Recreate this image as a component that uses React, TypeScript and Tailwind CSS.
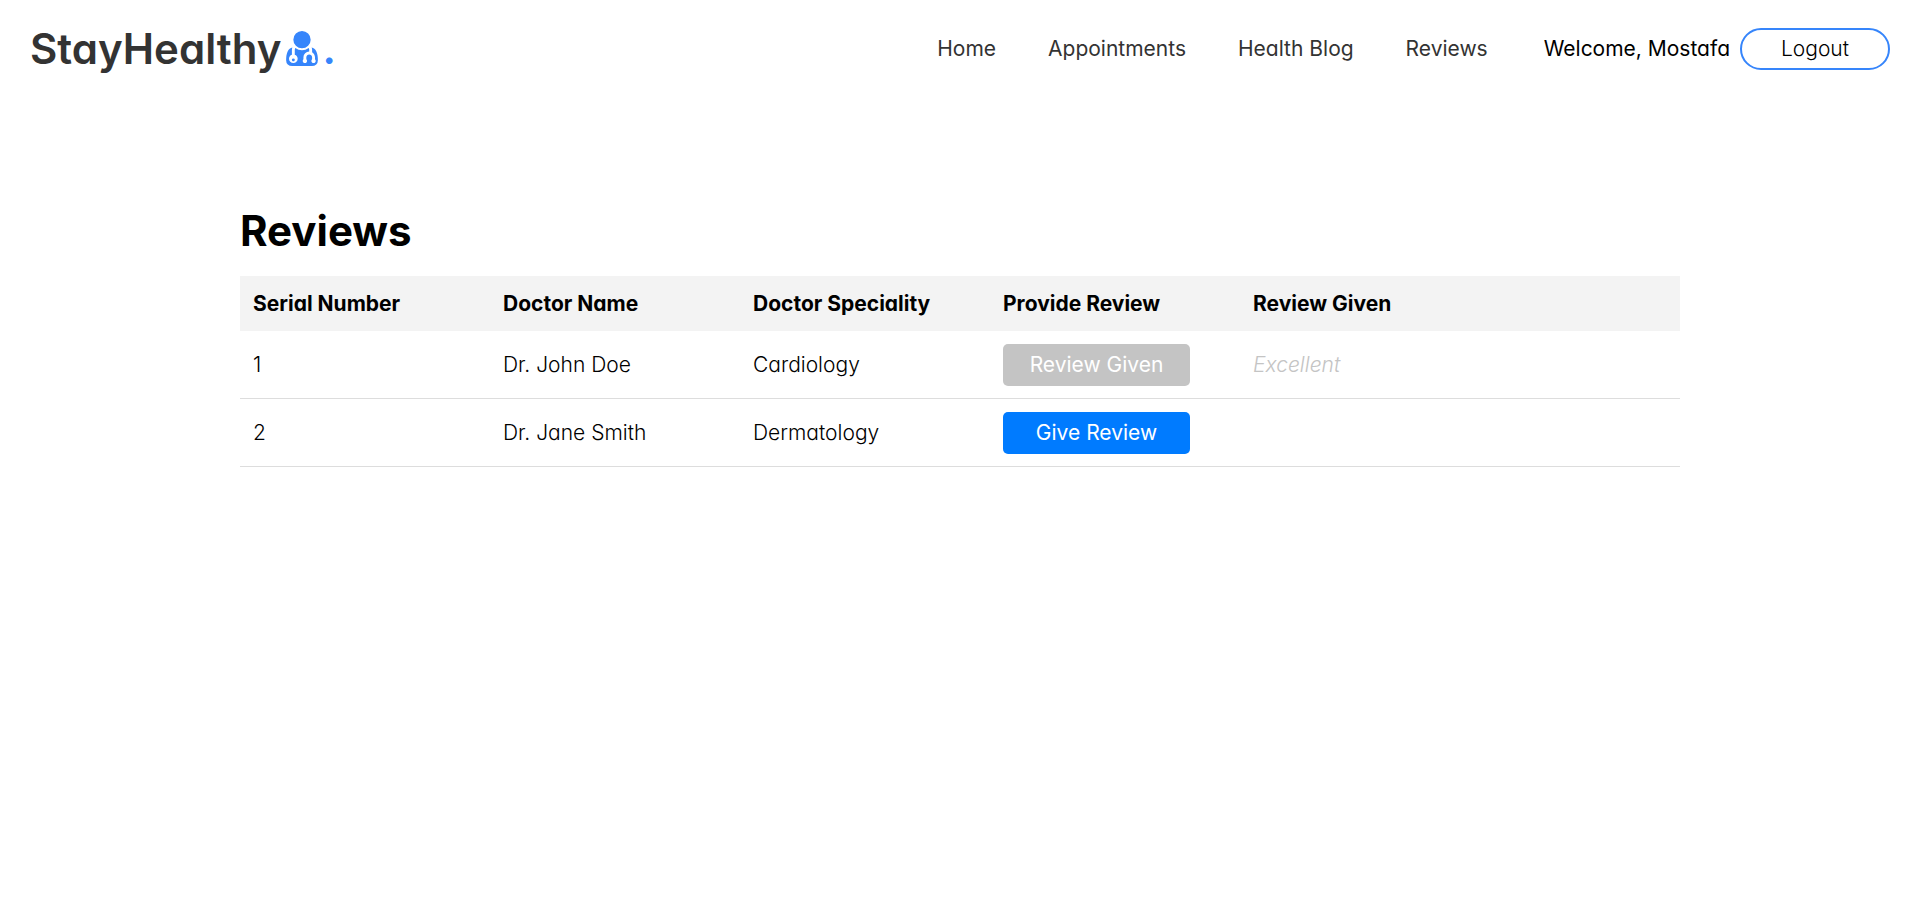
const links = ['Home', 'Appointments', 'Health Blog', 'Reviews'];

const columns = ['Serial Number', 'Doctor Name', 'Doctor Speciality', 'Provide Review'];

const doctors = [
  { id: 1, name: 'Dr. John Doe', speciality: 'Cardiology', review: 'Excellent' },
  { id: 2, name: 'Dr. Jane Smith', speciality: 'Dermatology', review: '' },
];

function DoctorIcon() {
  return (
    <svg viewBox="192 128 1408 1552" className="mb-[7px] ml-[5px] h-[35px] w-8 fill-[#3685fb]" aria-hidden="true">
      <path d="M576 1408q0 26-19 45t-45 19-45-19-19-45 19-45 45-19 45 19 19 45zm1024 12q0 121-73 190t-194 69h-874q-121 0-194-69t-73-190q0-68 5.5-131t24-138 47.5-132.5 81-103 120-60.5q-22 52-22 120v203q-58 20-93 70t-35 111q0 80 56 136t136 56 136-56 56-136q0-61-35.5-111t-92.5-70v-203q0-62 25-93 132 104 295 104t295-104q25 31 25 93v64q-106 0-181 75t-75 181v89q-32 29-32 71 0 40 28 68t68 28 68-28 28-68q0-42-32-71v-89q0-52 38-90t90-38 90 38 38 90v89q-32 29-32 71 0 40 28 68t68 28 68-28 28-68q0-42-32-71v-89q0-68-34.5-127.5t-93.5-93.5q0-10 .5-42.5t0-48-2.5-41.5-7-47-13-40q68 15 120 60.5t81 103 47.5 132.5 24 138 5.5 131zm-320-908q0 159-112.5 271.5t-271.5 112.5-271.5-112.5-112.5-271.5 112.5-271.5 271.5-112.5 271.5 112.5 112.5 271.5z" />
    </svg>
  );
}

export default function App() {
  return (
    <div className="min-h-screen bg-white font-['Inter',sans-serif] text-[21px] leading-7 font-light text-black [font-feature-settings:'cv11']">
      <header className="flex h-[98px] items-center justify-between px-[30px]">
        <a href="#" className="flex items-end text-[42px] leading-[48px] font-semibold text-[#333]">
          StayHealthy
          <DoctorIcon />
          <span className="ml-1 text-[#3685fb]">.</span>
        </a>
        <nav className="flex items-center">
          <ul className="flex gap-[52px]">
            {links.map((label) => (
              <li key={label}>
                <a href="#" className="font-normal text-[#333]">{label}</a>
              </li>
            ))}
          </ul>
          <span className="mr-2.5 ml-14 font-normal">Welcome, Mostafa</span>
          <button type="button" className="h-[42px] w-[150px] rounded-full border-2 border-[#3685fb]">
            Logout
          </button>
        </nav>
      </header>

      <main className="mx-auto w-3/4 pt-[103px]">
        <h1 className="text-[42px] leading-[60px] font-bold">Reviews</h1>
        <table className="mt-[15px] w-full table-fixed border-separate border-spacing-0 text-left">
          <thead className="bg-[#f3f3f3]">
            <tr className="h-[55px]">
              {columns.map((label) => (
                <th key={label} className="w-[250px] px-[13px] font-bold">{label}</th>
              ))}
              <th className="px-[13px] font-bold">Review Given</th>
            </tr>
          </thead>
          <tbody className="[&_td]:border-b [&_td]:border-[#ddd]">
            {doctors.map((d) => (
              <tr key={d.id} className="h-[68px]">
                <td className="px-[13px]">{d.id}</td>
                <td className="px-[13px]">{d.name}</td>
                <td className="px-[13px]">{d.speciality}</td>
                <td className="pl-[13px]">
                  <button
                    type="button"
                    disabled={d.review !== ''}
                    className="block h-[42px] w-[187px] rounded-[5px] bg-[#007bff] font-normal text-white disabled:bg-[#c4c4c4]"
                  >
                    {d.review ? 'Review Given' : 'Give Review'}
                  </button>
                </td>
                <td className="px-[13px] text-[#c4c4c4] italic">{d.review}</td>
              </tr>
            ))}
          </tbody>
        </table>
      </main>
    </div>
  );
}
